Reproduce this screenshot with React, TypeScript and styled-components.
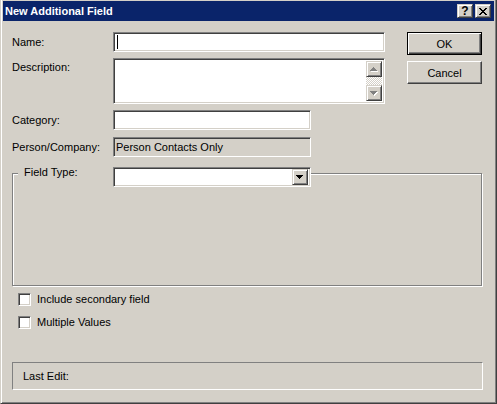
import React from 'react';
import styled, { createGlobalStyle, css } from 'styled-components';

const face = '#d4d0c8';
const shadow = '#808080';
const darkShadow = '#404040';
const highlight = '#ffffff';

const GlobalStyle = createGlobalStyle`
  html, body {
    margin: 0;
    padding: 0;
    background: ${face};
  }
  body {
    font-family: "Liberation Sans", Arial, sans-serif;
    font-size: 11px;
    color: #000;
  }
`;

const raised = css`
  border: 1px solid;
  border-color: ${face} ${darkShadow} ${darkShadow} ${face};
  box-shadow: inset 1px 1px 0 ${highlight}, inset -1px -1px 0 ${shadow};
`;

const sunken = css`
  border: 1px solid;
  border-color: ${shadow} ${highlight} ${highlight} ${shadow};
  box-shadow: inset 1px 1px 0 ${darkShadow}, inset -1px -1px 0 ${face};
`;

const Window = styled.div`
  box-sizing: border-box;
  width: 497px;
  height: 404px;
  display: flex;
  flex-direction: column;
  background: ${face};
  border-left: 1px solid ${face};
  border-right: 1px solid ${darkShadow};
  border-bottom: 1px solid ${darkShadow};
  padding: 1px 2px 2px 2px;
  box-shadow: inset 1px 0 0 ${highlight}, inset -1px -1px 0 ${shadow};
`;

const TitleBar = styled.div`
  height: 20px;
  flex: none;
  display: flex;
  align-items: center;
  padding: 0 3px 0 2px;
  background: #0a246a;
  color: #fff;
  font-weight: bold;
  font-size: 11px;
`;

const Title = styled.span`
  flex: 1;
`;

const CaptionButton = styled.div<{ $gap?: number }>`
  box-sizing: border-box;
  width: 16px;
  height: 14px;
  margin-left: ${(p) => p.$gap ?? 0}px;
  background: ${face};
  ${raised};
  display: flex;
  align-items: center;
  justify-content: center;
  color: #000;
  font-size: 12px;
  font-weight: bold;
  line-height: 12px;
`;

const Body = styled.div`
  flex: 1;
  display: flex;
  flex-direction: column;
  padding: 11px 11px 0 9px;
`;

const TopSection = styled.div`
  display: flex;
  align-items: flex-start;
`;

const Fields = styled.div`
  display: grid;
  grid-template-columns: 101px auto;
  row-gap: 6px;
`;

const Label = styled.div<{ $top?: boolean; $shift?: number }>`
  line-height: 13px;
  white-space: nowrap;
  align-self: ${(p) => (p.$top ? 'start' : 'center')};
  padding-top: ${(p) => (p.$top ? 3 : 0)}px;
  margin-top: ${(p) => p.$shift ?? 0}px;
`;

const Field = styled.div<{ $width: number; $height?: number; $disabled?: boolean; $shift?: number }>`
  box-sizing: border-box;
  width: ${(p) => p.$width}px;
  height: ${(p) => p.$height ?? 20}px;
  margin-top: ${(p) => p.$shift ?? 0}px;
  ${sunken};
  background: ${(p) => (p.$disabled ? face : '#fff')};
  display: flex;
  align-items: center;
  padding: 2px;
  line-height: 13px;
  white-space: nowrap;
`;

const Caret = styled.span`
  width: 1px;
  height: 14px;
  margin-left: 1px;
  background: #000;
`;

const MemoText = styled.div`
  flex: 1;
  align-self: stretch;
`;

const ScrollBar = styled.div`
  width: 16px;
  align-self: stretch;
  display: flex;
  flex-direction: column;
`;

const ScrollButton = styled.div`
  box-sizing: border-box;
  width: 16px;
  height: 16px;
  flex: none;
  background: ${face};
  ${raised};
  display: flex;
  align-items: center;
  justify-content: center;
`;

const ScrollTrack = styled.div`
  flex: 1;
  background-image: repeating-conic-gradient(${highlight} 0 25%, ${face} 0 50%);
  background-size: 2px 2px;
`;

const ButtonColumn = styled.div`
  display: flex;
  flex-direction: column;
  gap: 6px;
  margin-left: 22px;
`;

const PushButton = styled.button<{ $default?: boolean }>`
  box-sizing: border-box;
  width: 75px;
  height: 23px;
  padding: 0;
  font: inherit;
  color: #000;
  background: ${face};
  ${(p) =>
    p.$default
      ? css`
          border: 1px solid #000;
          box-shadow: inset 1px 1px 0 ${highlight}, inset -1px -1px 0 ${darkShadow},
            inset -2px -2px 0 ${shadow};
        `
      : css`
          border: 1px solid;
          border-color: ${highlight} ${darkShadow} ${darkShadow} ${highlight};
          box-shadow: inset -1px -1px 0 ${shadow};
        `}
`;

const GroupBox = styled.div`
  position: relative;
  box-sizing: border-box;
  width: 470px;
  height: 113px;
  margin-top: 16px;
  border: 1px solid ${shadow};
  box-shadow: inset 1px 1px 0 ${highlight}, 1px 1px 0 ${highlight};
`;

// caption row sits over the top edge of the frame
const GroupCaption = styled.div`
  position: absolute;
  top: -7px;
  left: 5px;
  display: flex;
  align-items: flex-start;
`;

const GroupLabel = styled.div`
  box-sizing: border-box;
  width: 95px;
  padding-left: 6px;
  margin-top: -1px;
  line-height: 13px;
  background: ${face};
`;

const DropButton = styled(ScrollButton)`
  margin-left: auto;
`;

const CheckRow = styled.label<{ $gap: number }>`
  display: flex;
  align-items: center;
  gap: 6px;
  padding-left: 6px;
  margin-top: ${(p) => p.$gap}px;
  line-height: 13px;
`;

const CheckBox = styled.span`
  box-sizing: border-box;
  width: 13px;
  height: 13px;
  background: #fff;
  ${sunken};
`;

const StatusBox = styled.div`
  box-sizing: border-box;
  width: 471px;
  height: 28px;
  margin-top: 33px;
  border: 1px solid;
  border-color: ${shadow} ${highlight} ${highlight} ${shadow};
  display: flex;
  align-items: center;
  padding-left: 10px;
  line-height: 13px;
`;

const Arrow: React.FC<{ up?: boolean; disabled?: boolean }> = ({ up, disabled }) => {
  const rows = [7, 5, 3, 1];
  const order = up ? [...rows].reverse() : rows;
  const fill = disabled ? shadow : '#000';
  return (
    <svg width="8" height="5" viewBox="0 0 8 5" shapeRendering="crispEdges">
      {disabled &&
        order.map((w, i) => (
          <rect key={`s${i}`} x={(7 - w) / 2 + 1} y={i + 1} width={w} height={1} fill={highlight} />
        ))}
      {order.map((w, i) => (
        <rect key={i} x={(7 - w) / 2} y={i} width={w} height={1} fill={fill} />
      ))}
    </svg>
  );
};

const CloseGlyph = () => (
  <svg width="8" height="7" viewBox="0 0 8 7" shapeRendering="crispEdges">
    {[0, 1, 2, 3, 4, 5, 6].map((i) => (
      <React.Fragment key={i}>
        <rect x={i} y={i} width={2} height={1} fill="#000" />
        <rect x={6 - i} y={i} width={2} height={1} fill="#000" />
      </React.Fragment>
    ))}
  </svg>
);

export default function App() {
  return (
    <>
      <GlobalStyle />
      <Window>
        <TitleBar>
          <Title>New Additional Field</Title>
          <CaptionButton>?</CaptionButton>
          <CaptionButton $gap={2}>
            <CloseGlyph />
          </CaptionButton>
        </TitleBar>
        <Body>
          <TopSection>
            <Fields>
              <Label>Name:</Label>
              <Field $width={272}>
                <Caret />
              </Field>

              <Label $top>Description:</Label>
              <Field $width={272} $height={46}>
                <MemoText />
                <ScrollBar>
                  <ScrollButton>
                    <Arrow up disabled />
                  </ScrollButton>
                  <ScrollTrack />
                  <ScrollButton>
                    <Arrow disabled />
                  </ScrollButton>
                </ScrollBar>
              </Field>

              <Label>Category:</Label>
              <Field $width={198} />

              <Label $shift={1}>Person/Company:</Label>
              <Field $width={198} $disabled $shift={1}>
                Person Contacts Only
              </Field>
            </Fields>
            <ButtonColumn>
              <PushButton $default>OK</PushButton>
              <PushButton>Cancel</PushButton>
            </ButtonColumn>
          </TopSection>

          <GroupBox>
            <GroupCaption>
              <GroupLabel>Field Type:</GroupLabel>
              <Field $width={198}>
                <DropButton>
                  <Arrow />
                </DropButton>
              </Field>
            </GroupCaption>
          </GroupBox>

          <CheckRow $gap={7}>
            <CheckBox />
            Include secondary field
          </CheckRow>
          <CheckRow $gap={10}>
            <CheckBox />
            Multiple Values
          </CheckRow>

          <StatusBox>Last Edit:</StatusBox>
        </Body>
      </Window>
    </>
  );
}
